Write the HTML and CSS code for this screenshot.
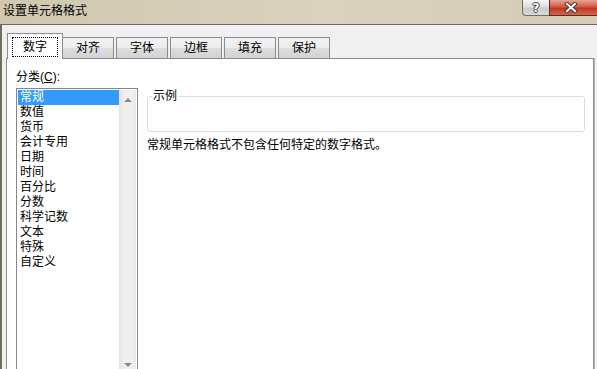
FILE: index.html
```html
<!DOCTYPE html>
<html lang="zh-CN">
<head>
    <meta charset="UTF-8">
    <title>设置单元格格式</title>
    <link rel="stylesheet" href="styles.css">
</head>
<body>
    <div class="titlebar">
        <span class="title">设置单元格格式</span>
        <div class="caption-buttons">
            <button class="help-button">?</button>
            <button class="close-button">
                <svg width="14" height="11" viewBox="0 0 14 11">
                    <path d="M3 2 L11 9 M11 2 L3 9" stroke="#3b3b3b" stroke-width="4" stroke-linecap="square" fill="none"/>
                    <path d="M3 2 L11 9 M11 2 L3 9" stroke="#ffffff" stroke-width="2" stroke-linecap="square" fill="none"/>
                </svg>
            </button>
        </div>
    </div>

    <div class="dialog">
        <div class="tabs">
            <div class="tab active"><span class="focus">数字</span></div>
            <div class="tab">对齐</div>
            <div class="tab">字体</div>
            <div class="tab">边框</div>
            <div class="tab">填充</div>
            <div class="tab">保护</div>
        </div>

        <div class="panel">
            <div class="category">
                <div class="field-label">分类(<u>C</u>):</div>
                <div class="listbox">
                    <ul class="items">
                        <li class="selected">常规</li>
                        <li>数值</li>
                        <li>货币</li>
                        <li>会计专用</li>
                        <li>日期</li>
                        <li>时间</li>
                        <li>百分比</li>
                        <li>分数</li>
                        <li>科学记数</li>
                        <li>文本</li>
                        <li>特殊</li>
                        <li>自定义</li>
                    </ul>
                    <div class="scrollbar">
                        <span class="arrow-up"></span>
                        <span class="arrow-down"></span>
                    </div>
                </div>
            </div>

            <div class="detail">
                <fieldset class="sample">
                    <legend>示例</legend>
                </fieldset>
                <p class="description">常规单元格格式不包含任何特定的数字格式。</p>
            </div>
        </div>
    </div>
</body>
</html>
```

FILE: styles.css
```css
body {
    font-family: "Liberation Sans", "Noto Sans CJK SC", sans-serif;
    font-size: 12px;
    margin: 0;
    width: 597px;
    height: 369px;
    overflow: hidden;
    background-color: #f0f0f0;
    color: #000;
}

.titlebar {
    display: flex;
    height: 24px;
    border-bottom: 1px solid #6d695f;
    background: linear-gradient(to right, #d0c7ae, #dad2be 55%, #d5ccb6);
}

.title {
    padding-left: 3px;
    line-height: 23px;
}

.caption-buttons {
    display: flex;
    margin-left: auto;
    height: 16px;
}

.help-button {
    width: 27px;
    height: 16px;
    padding: 0;
    border: 1px solid #6b6b6b;
    border-top: none;
    border-right: none;
    border-bottom-left-radius: 4px;
    background: linear-gradient(#f5f5f5, #dedede 45%, #cbcbcb 55%, #dadada);
    color: #fff;
    font-family: "DejaVu Sans", sans-serif;
    font-weight: bold;
    font-size: 12px;
    line-height: 14px;
    text-shadow: 1px 0 0 #444, -1px 0 0 #444, 0 1px 0 #444, 0 -1px 0 #444;
}

.close-button {
    width: 48px;
    height: 16px;
    padding: 0 6px 0 0;
    border: 1px solid #5e2a22;
    border-top: none;
    border-right: none;
    background: linear-gradient(#e7a496, #d35a44 45%, #c3361f 55%, #d7644a);
    display: flex;
    align-items: center;
    justify-content: center;
}

.dialog {
    border-left: 2px solid #736d60;
    padding: 0 3px 0 4px;
}

.tabs {
    display: flex;
    align-items: flex-end;
    height: 33px;
    padding-left: 1px;
}

.tab {
    box-sizing: border-box;
    width: 52px;
    height: 21px;
    margin-left: 2px;
    border: 1px solid #898c95;
    border-bottom: none;
    background: linear-gradient(#f3f3f3, #ececec 50%, #dedede 50%, #d2d2d2);
    text-align: center;
    line-height: 20px;
}

.tab.active {
    width: 56px;
    height: 26px;
    margin-left: 0;
    margin-bottom: -1px;
    padding-top: 3px;
    background: #fff;
    position: relative;
    z-index: 1;
}

.tab.active + .tab {
    margin-left: -1px;
}

.focus {
    display: block;
    box-sizing: border-box;
    width: 46px;
    height: 20px;
    margin: 0 auto;
    border: 1px dotted #000;
    line-height: 18px;
}

.panel {
    display: flex;
    height: 320px;
    border: 1px solid #898c95;
    background-color: #fff;
    box-shadow: 1px 0 0 #b5b5b5;
}

.category {
    padding: 11px 0 0 9px;
}

.field-label {
    line-height: 15px;
    margin-bottom: 3px;
}

.listbox {
    display: flex;
    box-sizing: border-box;
    width: 122px;
    height: 290px;
    padding: 1px;
    border: 1px solid #828790;
}

.items {
    flex: 1;
    margin: 0;
    padding: 0;
    list-style: none;
}

.items li {
    padding-left: 2px;
    line-height: 15px;
}

.items li.selected {
    background-color: #3399ff;
    color: #fff;
}

.scrollbar {
    display: flex;
    flex-direction: column;
    justify-content: space-between;
    align-items: center;
    width: 17px;
    padding: 8px 0 9px;
    background: linear-gradient(to right, #e3e3e3, #efefef 30%, #f0f0f0 70%, #e8e8e8);
}

.arrow-up,
.arrow-down {
    width: 0;
    height: 0;
    border-left: 4px solid transparent;
    border-right: 4px solid transparent;
}

.arrow-up {
    border-bottom: 4px solid #8a8a8a;
}

.arrow-down {
    border-top: 4px solid #8a8a8a;
}

.detail {
    flex: 1;
    margin: 0 8px 0 9px;
}

.sample {
    box-sizing: border-box;
    height: 43px;
    margin: 30px 0 0;
    padding: 0 0 0 4px;
    border: 1px solid #d5dfe5;
    border-radius: 3px;
}

.sample legend {
    padding: 0 1px;
    line-height: 14px;
}

.description {
    margin: 6px 0 0;
    line-height: 15px;
}
```
